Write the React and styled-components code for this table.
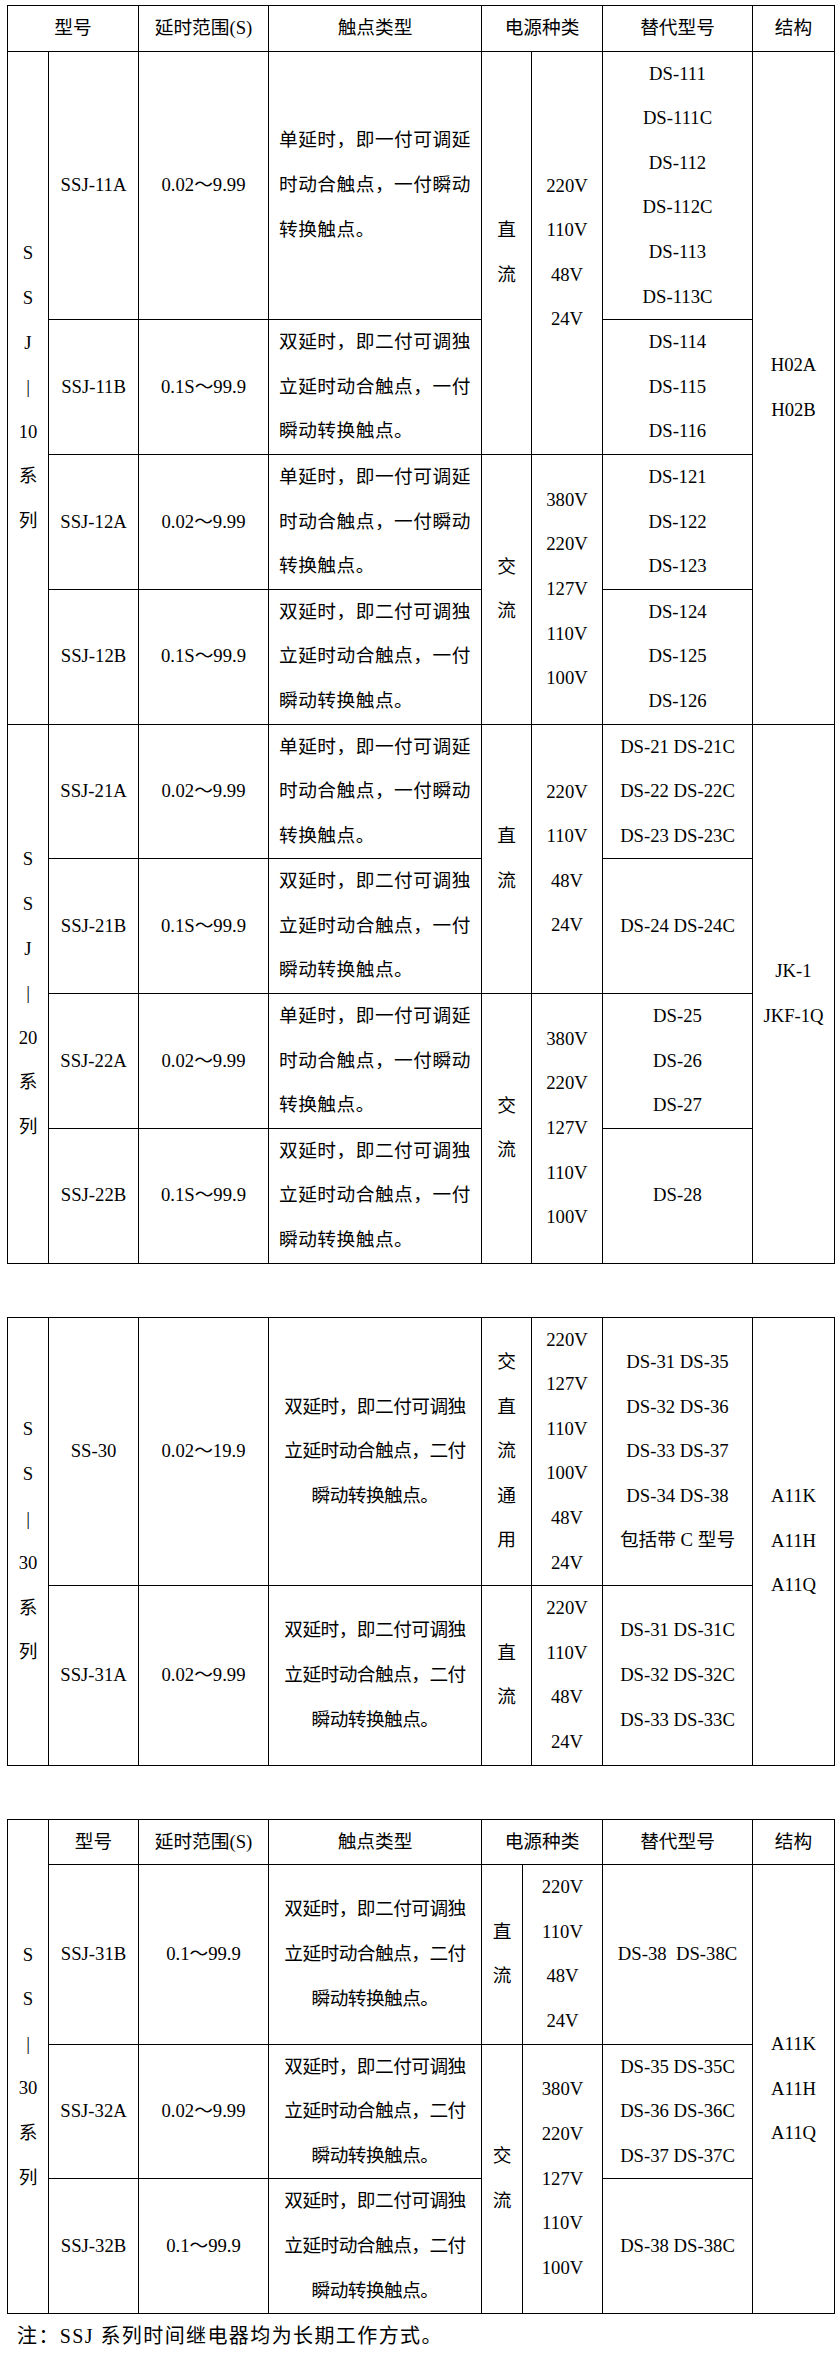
import styled, { createGlobalStyle } from "styled-components";

const GlobalStyle = createGlobalStyle`
  html, body {
    margin: 0;
    background: #fff;
  }
  body {
    font-family: "Liberation Serif", "Noto Sans CJK SC", serif;
    font-size: 18.7px;
    color: #000;
  }
`;

const Page = styled.div`
  padding: 5px 6px 0 7px;
`;

const Sheet = styled.table`
  width: 827px;
  border-collapse: collapse;
  table-layout: fixed;
  margin-bottom: ${(p) => (p.$last ? "0" : "53px")};
`;

const Col = styled.col`
  width: ${(p) => p.$w}px;
`;

const Cell = styled.td`
  border: 1px solid #000;
  padding: 0;
  text-align: center;
  vertical-align: middle;
  line-height: 44.6px;
  white-space: nowrap;
`;

const HeadCell = styled(Cell)``;

const ContactCell = styled(Cell)`
  text-align: ${(p) => (p.$centered ? "center" : "left")};
  padding-left: ${(p) => (p.$centered ? "0" : "10px")};
  letter-spacing: ${(p) => (p.$centered ? "-0.55px" : "0.5px")};
`;

const Line = styled.span`
  display: block;
`;

const Note = styled.p`
  margin: 0;
  padding-left: 10px;
  line-height: 45px;
  font-size: 20px;
  letter-spacing: 1.4px;
`;

// column widths, the last table has a narrower power-type column
const WIDE = [41, 90, 130, 213, 50, 71, 150, 82];
const NARROW = [41, 90, 130, 213, 41, 80, 150, 82];

const SINGLE = ["单延时，即一付可调延", "时动合触点，一付瞬动", "转换触点。"];
const DOUBLE = ["双延时，即二付可调独", "立延时动合触点，一付", "瞬动转换触点。"];
const DOUBLE2 = ["双延时，即二付可调独", "立延时动合触点，二付", "瞬动转换触点。"];
const DC = ["直", "流"];
const AC = ["交", "流"];
const DC4 = ["220V", "110V", "48V", "24V"];
const AC5 = ["380V", "220V", "127V", "110V", "100V"];
const A11 = ["A11K", "A11H", "A11Q"];

function Lines({ items }) {
  return items.map((t, i) => <Line key={i}>{t}</Line>);
}

function Cols({ widths }) {
  return (
    <colgroup>
      {widths.map((w, i) => (
        <Col key={i} $w={w} />
      ))}
    </colgroup>
  );
}

function FirstSheet() {
  return (
    <Sheet>
      <Cols widths={WIDE} />
      <tbody>
        <tr>
          <HeadCell colSpan={2}>型号</HeadCell>
          <HeadCell>延时范围(S)</HeadCell>
          <HeadCell>触点类型</HeadCell>
          <HeadCell colSpan={2}>电源种类</HeadCell>
          <HeadCell>替代型号</HeadCell>
          <HeadCell>结构</HeadCell>
        </tr>
        <tr>
          <Cell rowSpan={4}>
            <Lines items={["S", "S", "J", "|", "10", "系", "列"]} />
          </Cell>
          <Cell>SSJ-11A</Cell>
          <Cell>0.02～9.99</Cell>
          <ContactCell>
            <Lines items={SINGLE} />
          </ContactCell>
          <Cell rowSpan={2}>
            <Lines items={DC} />
          </Cell>
          <Cell rowSpan={2}>
            <Lines items={DC4} />
          </Cell>
          <Cell>
            <Lines items={["DS-111", "DS-111C", "DS-112", "DS-112C", "DS-113", "DS-113C"]} />
          </Cell>
          <Cell rowSpan={4}>
            <Lines items={["H02A", "H02B"]} />
          </Cell>
        </tr>
        <tr>
          <Cell>SSJ-11B</Cell>
          <Cell>0.1S～99.9</Cell>
          <ContactCell>
            <Lines items={DOUBLE} />
          </ContactCell>
          <Cell>
            <Lines items={["DS-114", "DS-115", "DS-116"]} />
          </Cell>
        </tr>
        <tr>
          <Cell>SSJ-12A</Cell>
          <Cell>0.02～9.99</Cell>
          <ContactCell>
            <Lines items={SINGLE} />
          </ContactCell>
          <Cell rowSpan={2}>
            <Lines items={AC} />
          </Cell>
          <Cell rowSpan={2}>
            <Lines items={AC5} />
          </Cell>
          <Cell>
            <Lines items={["DS-121", "DS-122", "DS-123"]} />
          </Cell>
        </tr>
        <tr>
          <Cell>SSJ-12B</Cell>
          <Cell>0.1S～99.9</Cell>
          <ContactCell>
            <Lines items={DOUBLE} />
          </ContactCell>
          <Cell>
            <Lines items={["DS-124", "DS-125", "DS-126"]} />
          </Cell>
        </tr>
        <tr>
          <Cell rowSpan={4}>
            <Lines items={["S", "S", "J", "|", "20", "系", "列"]} />
          </Cell>
          <Cell>SSJ-21A</Cell>
          <Cell>0.02～9.99</Cell>
          <ContactCell>
            <Lines items={SINGLE} />
          </ContactCell>
          <Cell rowSpan={2}>
            <Lines items={DC} />
          </Cell>
          <Cell rowSpan={2}>
            <Lines items={DC4} />
          </Cell>
          <Cell>
            <Lines items={["DS-21 DS-21C", "DS-22 DS-22C", "DS-23 DS-23C"]} />
          </Cell>
          <Cell rowSpan={4}>
            <Lines items={["JK-1", "JKF-1Q"]} />
          </Cell>
        </tr>
        <tr>
          <Cell>SSJ-21B</Cell>
          <Cell>0.1S～99.9</Cell>
          <ContactCell>
            <Lines items={DOUBLE} />
          </ContactCell>
          <Cell>DS-24 DS-24C</Cell>
        </tr>
        <tr>
          <Cell>SSJ-22A</Cell>
          <Cell>0.02～9.99</Cell>
          <ContactCell>
            <Lines items={SINGLE} />
          </ContactCell>
          <Cell rowSpan={2}>
            <Lines items={AC} />
          </Cell>
          <Cell rowSpan={2}>
            <Lines items={AC5} />
          </Cell>
          <Cell>
            <Lines items={["DS-25", "DS-26", "DS-27"]} />
          </Cell>
        </tr>
        <tr>
          <Cell>SSJ-22B</Cell>
          <Cell>0.1S～99.9</Cell>
          <ContactCell>
            <Lines items={DOUBLE} />
          </ContactCell>
          <Cell>DS-28</Cell>
        </tr>
      </tbody>
    </Sheet>
  );
}

function SecondSheet() {
  return (
    <Sheet>
      <Cols widths={WIDE} />
      <tbody>
        <tr>
          <Cell rowSpan={2}>
            <Lines items={["S", "S", "|", "30", "系", "列"]} />
          </Cell>
          <Cell>SS-30</Cell>
          <Cell>0.02～19.9</Cell>
          <ContactCell $centered>
            <Lines items={DOUBLE2} />
          </ContactCell>
          <Cell>
            <Lines items={["交", "直", "流", "通", "用"]} />
          </Cell>
          <Cell>
            <Lines items={["220V", "127V", "110V", "100V", "48V", "24V"]} />
          </Cell>
          <Cell>
            <Lines items={["DS-31 DS-35", "DS-32 DS-36", "DS-33 DS-37", "DS-34 DS-38", "包括带 C 型号"]} />
          </Cell>
          <Cell rowSpan={2}>
            <Lines items={A11} />
          </Cell>
        </tr>
        <tr>
          <Cell>SSJ-31A</Cell>
          <Cell>0.02～9.99</Cell>
          <ContactCell $centered>
            <Lines items={DOUBLE2} />
          </ContactCell>
          <Cell>
            <Lines items={DC} />
          </Cell>
          <Cell>
            <Lines items={DC4} />
          </Cell>
          <Cell>
            <Lines items={["DS-31 DS-31C", "DS-32 DS-32C", "DS-33 DS-33C"]} />
          </Cell>
        </tr>
      </tbody>
    </Sheet>
  );
}

function ThirdSheet() {
  return (
    <Sheet $last>
      <Cols widths={NARROW} />
      <tbody>
        <tr>
          <Cell rowSpan={4}>
            <Lines items={["S", "S", "|", "30", "系", "列"]} />
          </Cell>
          <HeadCell>型号</HeadCell>
          <HeadCell>延时范围(S)</HeadCell>
          <HeadCell>触点类型</HeadCell>
          <HeadCell colSpan={2}>电源种类</HeadCell>
          <HeadCell>替代型号</HeadCell>
          <HeadCell>结构</HeadCell>
        </tr>
        <tr>
          <Cell>SSJ-31B</Cell>
          <Cell>0.1～99.9</Cell>
          <ContactCell $centered>
            <Lines items={DOUBLE2} />
          </ContactCell>
          <Cell>
            <Lines items={DC} />
          </Cell>
          <Cell>
            <Lines items={DC4} />
          </Cell>
          <Cell>DS-38{"\u00a0\u00a0"}DS-38C</Cell>
          <Cell rowSpan={3}>
            <Lines items={A11} />
          </Cell>
        </tr>
        <tr>
          <Cell>SSJ-32A</Cell>
          <Cell>0.02～9.99</Cell>
          <ContactCell $centered>
            <Lines items={DOUBLE2} />
          </ContactCell>
          <Cell rowSpan={2}>
            <Lines items={AC} />
          </Cell>
          <Cell rowSpan={2}>
            <Lines items={AC5} />
          </Cell>
          <Cell>
            <Lines items={["DS-35 DS-35C", "DS-36 DS-36C", "DS-37 DS-37C"]} />
          </Cell>
        </tr>
        <tr>
          <Cell>SSJ-32B</Cell>
          <Cell>0.1～99.9</Cell>
          <ContactCell $centered>
            <Lines items={DOUBLE2} />
          </ContactCell>
          <Cell>DS-38 DS-38C</Cell>
        </tr>
      </tbody>
    </Sheet>
  );
}

export default function App() {
  return (
    <>
      <GlobalStyle />
      <Page>
        <FirstSheet />
        <SecondSheet />
        <ThirdSheet />
        <Note>注：SSJ 系列时间继电器均为长期工作方式。</Note>
      </Page>
    </>
  );
}
